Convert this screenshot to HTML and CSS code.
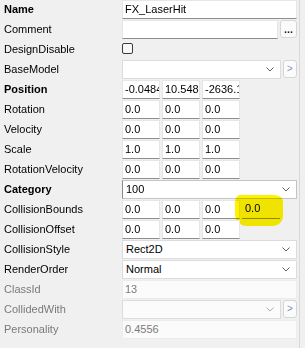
FILE: index.html
```html
<!DOCTYPE html>
<html>
<head>
<meta charset="utf-8">
<link rel="stylesheet" href="styles.css">
</head>
<body>
<div class="panel">
  <div class="grid">
    <div class="label bold">Name</div>
    <div class="value"><div class="tb wide">FX_LaserHit</div></div>

    <div class="label">Comment</div>
    <div class="value"><div class="tb wide"></div><div class="btn dots">...</div></div>

    <div class="label">DesignDisable</div>
    <div class="value"><div class="check"></div></div>

    <div class="label">BaseModel</div>
    <div class="value"><div class="combo wide"><span></span><svg class="chev" width="8" height="5" viewBox="0 0 8 5"><path d="M0.5 0.5 L4 4 L7.5 0.5" fill="none" stroke="#606060" stroke-width="1"/></svg></div><div class="btn arrow">&gt;</div></div>

    <div class="label bold">Position</div>
    <div class="value"><div class="tb num">-0.0484</div><div class="tb num">10.548</div><div class="tb num">-2636.12</div></div>

    <div class="label">Rotation</div>
    <div class="value"><div class="tb num">0.0</div><div class="tb num">0.0</div><div class="tb num">0.0</div></div>

    <div class="label">Velocity</div>
    <div class="value"><div class="tb num">0.0</div><div class="tb num">0.0</div><div class="tb num">0.0</div></div>

    <div class="label">Scale</div>
    <div class="value"><div class="tb num">1.0</div><div class="tb num">1.0</div><div class="tb num">1.0</div></div>

    <div class="label">RotationVelocity</div>
    <div class="value"><div class="tb num">0.0</div><div class="tb num">0.0</div><div class="tb num">0.0</div></div>

    <div class="label bold">Category</div>
    <div class="value"><div class="combo wide focus"><span>100</span><svg class="chev" width="8" height="5" viewBox="0 0 8 5"><path d="M0.5 0.5 L4 4 L7.5 0.5" fill="none" stroke="#606060" stroke-width="1"/></svg></div></div>

    <div class="label">CollisionBounds</div>
    <div class="value"><div class="tb num">0.0</div><div class="tb num">0.0</div><div class="tb num">0.0</div><div class="tb num hl">0.0<div class="marker"></div></div></div>

    <div class="label">CollisionOffset</div>
    <div class="value"><div class="tb num">0.0</div><div class="tb num">0.0</div><div class="tb num">0.0</div></div>

    <div class="label">CollisionStyle</div>
    <div class="value"><div class="combo wide"><span>Rect2D</span><svg class="chev" width="8" height="5" viewBox="0 0 8 5"><path d="M0.5 0.5 L4 4 L7.5 0.5" fill="none" stroke="#606060" stroke-width="1"/></svg></div></div>

    <div class="label">RenderOrder</div>
    <div class="value"><div class="combo wide"><span>Normal</span><svg class="chev" width="8" height="5" viewBox="0 0 8 5"><path d="M0.5 0.5 L4 4 L7.5 0.5" fill="none" stroke="#606060" stroke-width="1"/></svg></div></div>

    <div class="label dis">ClassId</div>
    <div class="value"><div class="tb wide ro">13</div></div>

    <div class="label dis">CollidedWith</div>
    <div class="value"><div class="combo wide ro"><span></span><svg class="chev" width="8" height="5" viewBox="0 0 8 5"><path d="M0.5 0.5 L4 4 L7.5 0.5" fill="none" stroke="#b0b0b0" stroke-width="1"/></svg></div><div class="btn arrow">&gt;</div></div>

    <div class="label dis">Personality</div>
    <div class="value"><div class="tb wide ro">0.4556</div></div>
  </div>
</div>
</body>
</html>
```

FILE: styles.css
```css
html, body {
  margin: 0;
  padding: 0;
  background: #f0f0f0;
}
body {
  font-family: "Liberation Sans", Arial, sans-serif;
  font-size: 11px;
  color: #000;
  width: 305px;
  height: 348px;
  overflow: hidden;
}
.panel {
  width: 300px;
  height: 348px;
  border-right: 1px solid #d8d8d8;
  box-sizing: border-box;
}
.grid {
  display: grid;
  grid-template-columns: 122px 175px;
  grid-auto-rows: 20px;
}
.label {
  padding-left: 4px;
  line-height: 19px;
  height: 19px;
  white-space: nowrap;
  overflow: hidden;
}
.bold { font-weight: bold; }
.dis { color: #7a7a7a; }
.value {
  display: flex;
  gap: 2px;
  height: 19px;
  align-items: stretch;
  position: relative;
}
.tb {
  box-sizing: border-box;
  background: #fff;
  border: 1px solid #e6e6e6;
  border-bottom-color: #8e8e8e;
  padding-left: 2px;
  line-height: 17px;
  white-space: nowrap;
  overflow: hidden;
}
.wide { flex: 1; }
.num { width: 38px; flex: none; }
.tb.ro {
  border-color: #ececec;
  background: #fbfbfb;
  color: #7a7a7a;
}
.combo {
  box-sizing: border-box;
  background: #fff;
  border: 1px solid #dcdcdc;
  display: flex;
  align-items: center;
  justify-content: space-between;
  padding: 0 6px 0 3px;
  line-height: 17px;
}
.combo.focus { border-color: #c4c4c4; border-left-color: #8a8a8a; }
.combo.ro { background: #fbfbfb; }
.chev { display: block; }
.check {
  width: 11px;
  height: 11px;
  margin-top: 3px;
  box-sizing: border-box;
  border: 1px solid #3a3a3a;
  border-radius: 2px;
  background: #f7f7f7;
}
.btn {
  box-sizing: border-box;
  border: 1px solid #d6d6d6;
  border-radius: 3px;
  background: #fbfbfb;
  text-align: center;
  flex: none;
}
.dots {
  width: 17px;
  height: 18px;
  line-height: 16px;
  color: #1a1a40;
  font-weight: bold;
}
.arrow {
  width: 14px;
  height: 18px;
  line-height: 16px;
  color: #7b8fb8;
  font-size: 10px;
}
.hl {
  background: transparent;
  border: none;
  border-bottom: 1px solid #8e8e8e;
  position: relative;
  overflow: visible;
  padding-left: 3px;
}
.marker {
  position: absolute;
  left: -7px;
  top: -5px;
  width: 48px;
  height: 31px;
  background: #fff200;
  border-radius: 5px 9px 10px 12px / 8px 6px 10px 12px;
  mix-blend-mode: multiply;
}
```
